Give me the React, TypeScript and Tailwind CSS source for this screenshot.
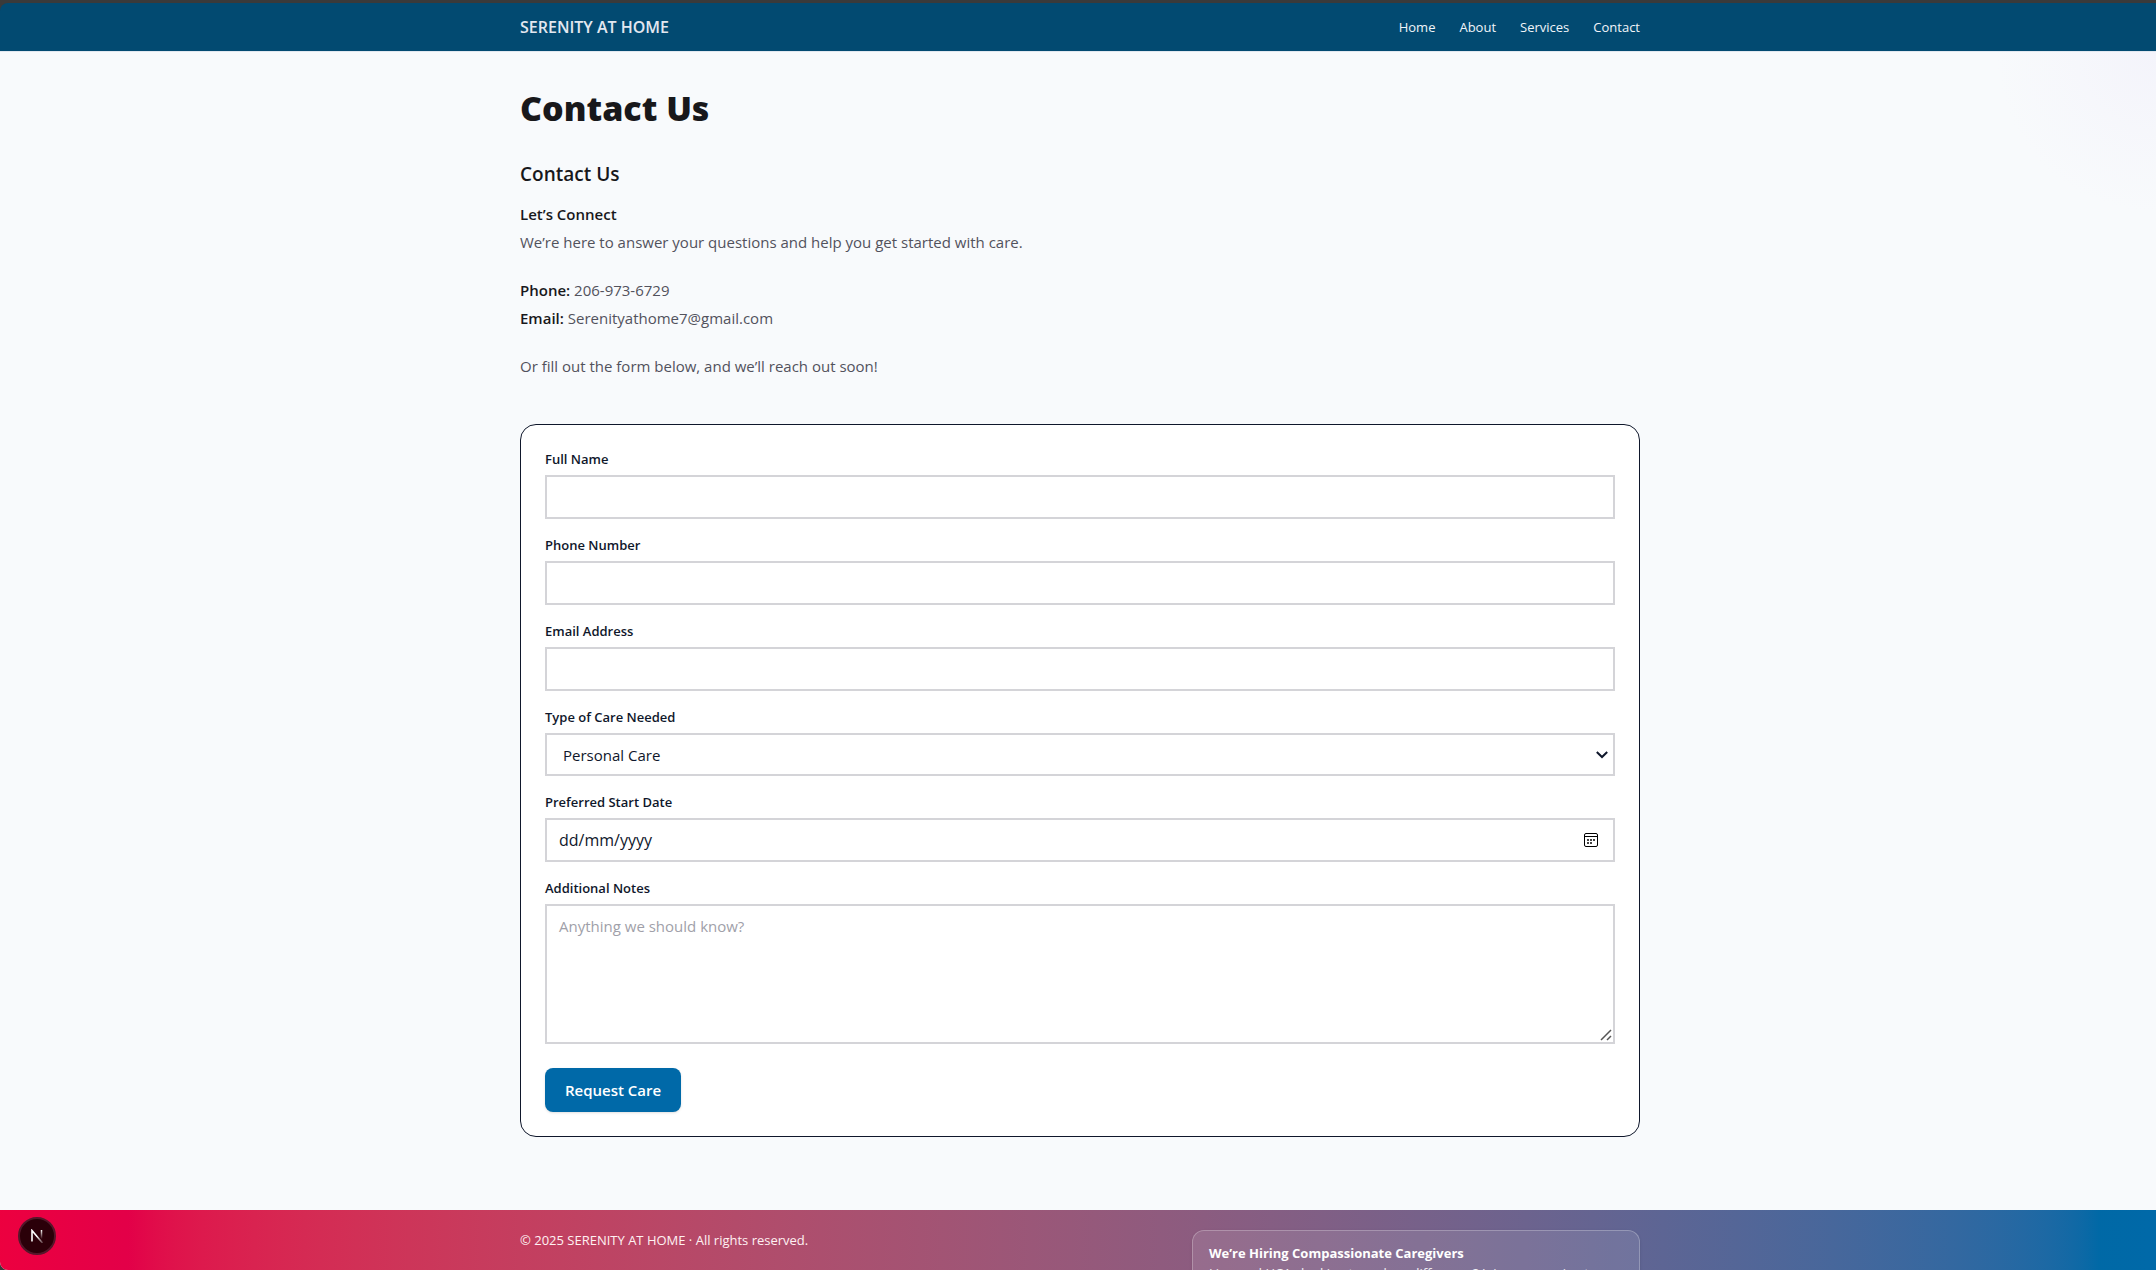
import React from 'react';

const navLinks = ['Home', 'About', 'Services', 'Contact'];

const control =
  'block w-full border-2 border-zinc-300 bg-white leading-6 text-slate-900 focus:outline-none focus:border-sky-700';

function Field({ id, label, children }: { id: string; label: string; children: React.ReactNode }) {
  return (
    <div className="flex flex-col gap-1.5">
      <label htmlFor={id} className="text-[13px] leading-5 font-semibold text-slate-900">
        {label}
      </label>
      {children}
    </div>
  );
}

function Container({ className, children }: { className: string; children: React.ReactNode }) {
  return (
    <div className="pl-1">
      <div className={`mx-auto max-w-6xl px-4 ${className}`}>{children}</div>
    </div>
  );
}

function Header() {
  return (
    <header className="shrink-0 rounded-tl-lg bg-sky-900">
      <Container className="flex h-12 items-center justify-between">
        <a href="#home" className="text-base font-semibold text-slate-200">
          SERENITY AT HOME
        </a>
        <nav className="flex gap-6 text-[13px] leading-5 text-slate-100">
          {navLinks.map((l) => (
            <a key={l} href={`#${l.toLowerCase()}`}>
              {l}
            </a>
          ))}
        </nav>
      </Container>
    </header>
  );
}

function CalendarIcon() {
  return (
    <svg width="14" height="14" viewBox="0 0 14 14" fill="none" aria-hidden="true">
      <rect x="0.5" y="0.5" width="13" height="13" rx="1.5" stroke="#000" />
      <path d="M0.5 3.5h13" stroke="#000" />
      <path
        d="M3 6h2v2H3zM6 6h2v2H6zM9 6h2v2H9zM3 9h2v2H3zM6 9h2v2H6z"
        fill="#444"
      />
    </svg>
  );
}

function CareForm() {
  return (
    <form
      className="mt-11 flex flex-col gap-4 rounded-2xl border border-slate-900 bg-white p-6"
      onSubmit={(e) => e.preventDefault()}
    >
      <Field id="name" label="Full Name">
        <input id="name" type="text" className={`${control} h-11 px-3`} />
      </Field>
      <Field id="phone" label="Phone Number">
        <input id="phone" type="tel" className={`${control} h-11 px-3`} />
      </Field>
      <Field id="email" label="Email Address">
        <input id="email" type="email" className={`${control} h-11 px-3`} />
      </Field>
      <Field id="care" label="Type of Care Needed">
        <div className="relative">
          <select id="care" className={`${control} h-[43px] appearance-none px-4 text-[15px]`}>
            <option>Personal Care</option>
            <option>Companionship</option>
            <option>Respite Care</option>
          </select>
          <svg
            className="pointer-events-none absolute top-[18px] right-[7px]"
            width="12"
            height="8"
            viewBox="0 0 12 8"
            fill="none"
            aria-hidden="true"
          >
            <path d="M0.8 1l5.2 5 5.2-5" stroke="#0f172b" strokeWidth="2" />
          </svg>
        </div>
      </Field>
      <Field id="date" label="Preferred Start Date">
        <div className="relative">
          <input
            id="date"
            type="text"
            placeholder="dd/mm/yyyy"
            className={`${control} h-11 px-3 text-base placeholder:text-slate-900`}
          />
          <button type="button" aria-label="Open calendar" className="absolute top-[15px] right-[17px]">
            <CalendarIcon />
          </button>
        </div>
      </Field>
      <Field id="notes" label="Additional Notes">
        <div className="relative">
          <textarea
            id="notes"
            placeholder="Anything we should know?"
            className={`${control} h-[140px] resize-y px-3 py-2 text-[15px] placeholder:text-zinc-400`}
          />
          <svg
            className="pointer-events-none absolute right-[3px] bottom-[3px] bg-white"
            width="12"
            height="12"
            viewBox="0 0 12 12"
            fill="none"
            aria-hidden="true"
          >
            <path d="M1 11L11 1M7 11l4-4" stroke="#555" strokeWidth="1.5" />
          </svg>
        </div>
      </Field>
      <button
        type="submit"
        className="mt-2 h-11 self-start rounded-lg bg-sky-700 px-5 text-[15px] leading-6 font-semibold text-white shadow-sm"
      >
        Request Care
      </button>
    </form>
  );
}

function Footer() {
  return (
    <footer className="bg-linear-to-r from-rose-600 to-sky-700 text-white">
      <Container className="flex items-start justify-between py-5">
        <p className="text-[13px] leading-5 font-medium text-rose-50">
          © 2025 SERENITY AT HOME · All rights reserved.
        </p>
        <aside className="w-full max-w-md rounded-xl border border-white/25 bg-white/10 px-4 py-3 text-[13px] leading-5 shadow-sm">
          <h3 className="font-bold">We’re Hiring Compassionate Caregivers</h3>
          <p className="text-white/90">Licensed HCAs looking to make a difference? Join our growing team.</p>
        </aside>
      </Container>
    </footer>
  );
}

export default function App() {
  return (
    <div className="flex h-screen flex-col overflow-hidden bg-[#3a3a3a] pt-[3px] font-['Open_Sans','Noto_Sans',sans-serif] text-zinc-900">
      <Header />
      <div className="min-h-0 flex-1 overflow-hidden rounded-bl-lg bg-slate-50">
        <main className="border-t border-slate-200 bg-[radial-gradient(circle_at_100%_0%,#f4f4fb_0,#f8fafc_160px)]">
          <Container className="pt-9 pb-[73px]">
            <h1 className="text-[34px] leading-10 font-extrabold">Contact Us</h1>
            <h2 className="mt-8 text-[19px] leading-7 font-semibold">Contact Us</h2>
            <div className="mt-3 text-[15px] leading-7 text-zinc-600">
              <h3 className="font-semibold text-zinc-900">Let’s Connect</h3>
              <p>We’re here to answer your questions and help you get started with care.</p>
              <p className="mt-5">
                <strong className="font-semibold text-zinc-900">Phone:</strong> 206-973-6729
              </p>
              <p>
                <strong className="font-semibold text-zinc-900">Email:</strong> Serenityathome7@gmail.com
              </p>
              <p className="mt-5">Or fill out the form below, and we’ll reach out soon!</p>
            </div>
            <CareForm />
          </Container>
        </main>
        <Footer />
      </div>
      <button
        type="button"
        aria-label="Open developer tools"
        className="fixed bottom-[15px] left-[18px] flex size-[38px] items-center justify-center rounded-full border-2 border-[#54172a] bg-[#2b0009]"
      >
        <svg width="14" height="14" viewBox="0 0 14 14" fill="none" aria-hidden="true">
          <defs>
            <linearGradient id="bar" x1="0" y1="1" x2="0" y2="10" gradientUnits="userSpaceOnUse">
              <stop stopColor="#fff" />
              <stop offset="1" stopColor="#fff" stopOpacity="0" />
            </linearGradient>
            <linearGradient id="slash" x1="7" y1="7" x2="13" y2="14" gradientUnits="userSpaceOnUse">
              <stop stopColor="#fff" />
              <stop offset="1" stopColor="#fff" stopOpacity="0.2" />
            </linearGradient>
          </defs>
          <path d="M2 12.5V1.5L12.5 14" stroke="url(#slash)" strokeWidth="1.6" />
          <path d="M11.5 1v9" stroke="url(#bar)" strokeWidth="1.5" />
        </svg>
      </button>
    </div>
  );
}
